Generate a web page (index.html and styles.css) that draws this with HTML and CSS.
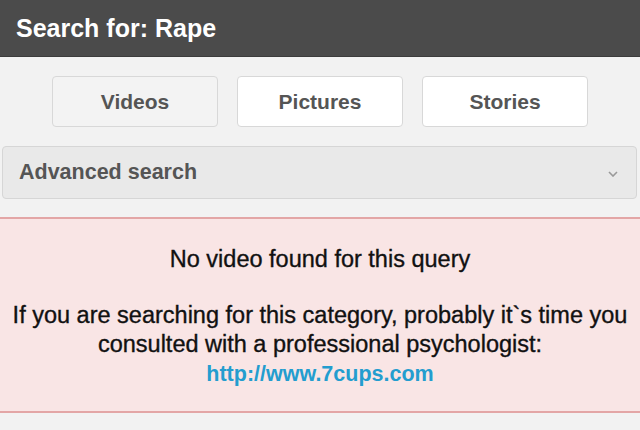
FILE: index.html
```html
<!DOCTYPE html>
<html>
<head>
<title>Search for: Rape</title>
<link rel="stylesheet" href="styles.css">
</head>
<body>
<div class="header">Search for: Rape</div>

<div class="tabs">
  <a class="tab tab-active" href="#">Videos</a>
  <a class="tab" href="#">Pictures</a>
  <a class="tab" href="#">Stories</a>
</div>

<div class="advanced">
  <span>Advanced search</span>
  <svg class="chevron" width="10" height="6" viewBox="0 0 10 6">
    <path d="M1 1 L5 5 L9 1" fill="none" stroke="#999" stroke-width="1.6"/>
  </svg>
</div>

<div class="alert">
  <p class="alert-title">No video found for this query</p>
  <p class="alert-text">If you are searching for this category, probably it`s time you<br>
  consulted with a professional psychologist:<br>
  <a href="#">http://www.7cups.com</a></p>
</div>
</body>
</html>
```

FILE: styles.css
```css
body {
  margin: 0;
  font-family: "Liberation Sans", Arial, sans-serif;
  background-color: #f2f2f2;
  height: 430px;
  overflow: hidden;
}

.header {
  background-color: #4b4b4b;
  color: #fff;
  font-size: 25px;
  font-weight: bold;
  height: 57px;
  line-height: 56px;
  padding-left: 16px;
  border-bottom: 1px solid #3c3c3c;
  box-sizing: border-box;
}

.tabs {
  display: flex;
  justify-content: center;
  gap: 19px;
  padding: 19px 0 0 0;
}

.tab {
  display: block;
  width: 166px;
  height: 51px;
  line-height: 49px;
  box-sizing: border-box;
  text-align: center;
  background-color: #fff;
  border: 1px solid #d8d8d8;
  border-radius: 4px;
  color: #555;
  font-size: 21px;
  font-weight: bold;
  text-decoration: none;
}

.tab-active {
  background-color: #f3f3f3;
}

.advanced {
  display: flex;
  align-items: center;
  justify-content: space-between;
  margin: 19px 3px 0 2px;
  height: 53px;
  padding: 0 18px 0 16px;
  box-sizing: border-box;
  background-color: #e9e9e9;
  border: 1px solid #d6d6d6;
  border-radius: 4px;
  color: #555;
  font-size: 21.5px;
  font-weight: bold;
}

.chevron {
  margin-top: 2px;
}

.alert {
  margin-top: 18px;
  height: 196px;
  box-sizing: border-box;
  background-color: #f9e5e5;
  border-top: 2px solid #e3a6a6;
  border-bottom: 2px solid #e3a6a6;
  text-align: center;
  color: #111;
  font-size: 23.5px;
  -webkit-text-stroke: 0.35px #111;
}

.alert-title {
  margin: 0;
  padding-top: 25px;
  line-height: 30px;
}

.alert-text {
  margin: 27px 0 0 0;
  line-height: 29px;
}

.alert-text a {
  color: #239dcf;
  -webkit-text-stroke: 0;
  font-weight: bold;
  font-size: 21.5px;
  text-decoration: none;
}
```
